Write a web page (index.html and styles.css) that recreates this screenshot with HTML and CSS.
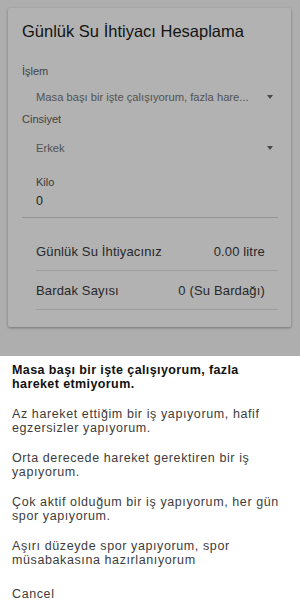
FILE: index.html
```html
<!DOCTYPE html>
<html lang="tr">
<head>
  <meta charset="UTF-8">
  <title>Günlük Su İhtiyacı Hesaplama</title>
  <meta name="viewport" content="width=device-width, initial-scale=1">
  <link rel="stylesheet" href="styles.css">
</head>
<body>
  <div class="card">
    <div class="card-title">Günlük Su İhtiyacı Hesaplama</div>

    <div class="field-label">İşlem</div>
    <div class="select">
      <span class="select-value">Masa başı bir işte çalışıyorum, fazla hare...</span>
      <span class="select-arrow"></span>
    </div>

    <div class="field-label tight">Cinsiyet</div>
    <div class="select">
      <span class="select-value">Erkek</span>
      <span class="select-arrow"></span>
    </div>

    <div class="input">
      <div class="input-label">Kilo</div>
      <div class="input-value">0</div>
    </div>

    <div class="results">
      <div class="result-row">
        <span>Günlük Su İhtiyacınız</span>
        <span>0.00 litre</span>
      </div>
      <div class="result-row">
        <span>Bardak Sayısı</span>
        <span>0 (Su Bardağı)</span>
      </div>
    </div>
  </div>

  <div class="overlay"></div>

  <div class="sheet">
    <div class="sheet-item selected">Masa başı bir işte çalışıyorum, fazla hareket etmiyorum.</div>
    <div class="sheet-item">Az hareket ettiğim bir iş yapıyorum, hafif egzersizler yapıyorum.</div>
    <div class="sheet-item">Orta derecede hareket gerektiren bir iş yapıyorum.</div>
    <div class="sheet-item">Çok aktif olduğum bir iş yapıyorum, her gün spor yapıyorum.</div>
    <div class="sheet-item">Aşırı düzeyde spor yapıyorum, spor müsabakasına hazırlanıyorum</div>
    <div class="sheet-cancel">Cancel</div>
  </div>
</body>
</html>
```

FILE: styles.css
```css
body {
  margin: 0;
  font-family: 'Liberation Sans', Arial, sans-serif;
  background: #fafafa;
  color: #212121;
  height: 616px;
  overflow: hidden;
}
.card {
  margin: 8px 9px 0 8px;
  padding: 13px 13px 17px 14px;
  background: #fff;
  border-radius: 2px;
  box-shadow: 0 1px 3px rgba(0,0,0,0.35);
}
.card-title {
  font-size: 16.5px;
  line-height: 20px;
  color: #1c1c1c;
}
.field-label {
  margin-top: 23px;
  font-size: 11px;
  line-height: 14px;
  color: #5f5f5f;
}
.field-label.tight {
  margin-top: 3px;
}
.select {
  display: flex;
  align-items: center;
  justify-content: space-between;
  height: 24px;
  margin-top: 7px;
  padding: 0 5px 0 14px;
}
.field-label.tight + .select {
  margin-top: 10px;
}
.select-value {
  font-size: 11.2px;
  color: #777;
  white-space: nowrap;
}
.select-arrow {
  width: 0;
  height: 0;
  border-left: 3.5px solid transparent;
  border-right: 3.5px solid transparent;
  border-top: 4px solid #6a6a6a;
}
.input {
  margin-top: 15px;
  padding: 0 0 8px 14px;
  border-bottom: 1px solid #d6d6d6;
}
.input-label {
  font-size: 11px;
  line-height: 14px;
  color: #555;
}
.input-value {
  margin-top: 4px;
  font-size: 12.5px;
  line-height: 16px;
  color: #333;
}
.results {
  margin-top: 14px;
  margin-left: 14px;
}
.result-row {
  display: flex;
  justify-content: space-between;
  align-items: center;
  height: 38px;
  padding: 0 13px 0 0;
  border-bottom: 1px solid #e2e2e2;
  font-size: 13px;
  letter-spacing: 0.15px;
  color: #3a3a3a;
}
.overlay {
  position: fixed;
  inset: 0;
  background: rgba(0,0,0,0.3);
}
.sheet {
  position: fixed;
  left: 0;
  right: 0;
  bottom: 0;
  height: 260px;
  background: #fff;
}
.sheet-item {
  padding: 8px 12px 9px 12px;
  font-size: 12.5px;
  line-height: 13.5px;
  letter-spacing: 0.6px;
  color: #3c3c3c;
}
.sheet-item.selected {
  font-weight: bold;
  letter-spacing: 0.4px;
  color: #111;
}
.sheet-cancel {
  padding: 12px 12px;
  font-size: 12.5px;
  line-height: 13.5px;
  letter-spacing: 0.6px;
  color: #3c3c3c;
}
```
